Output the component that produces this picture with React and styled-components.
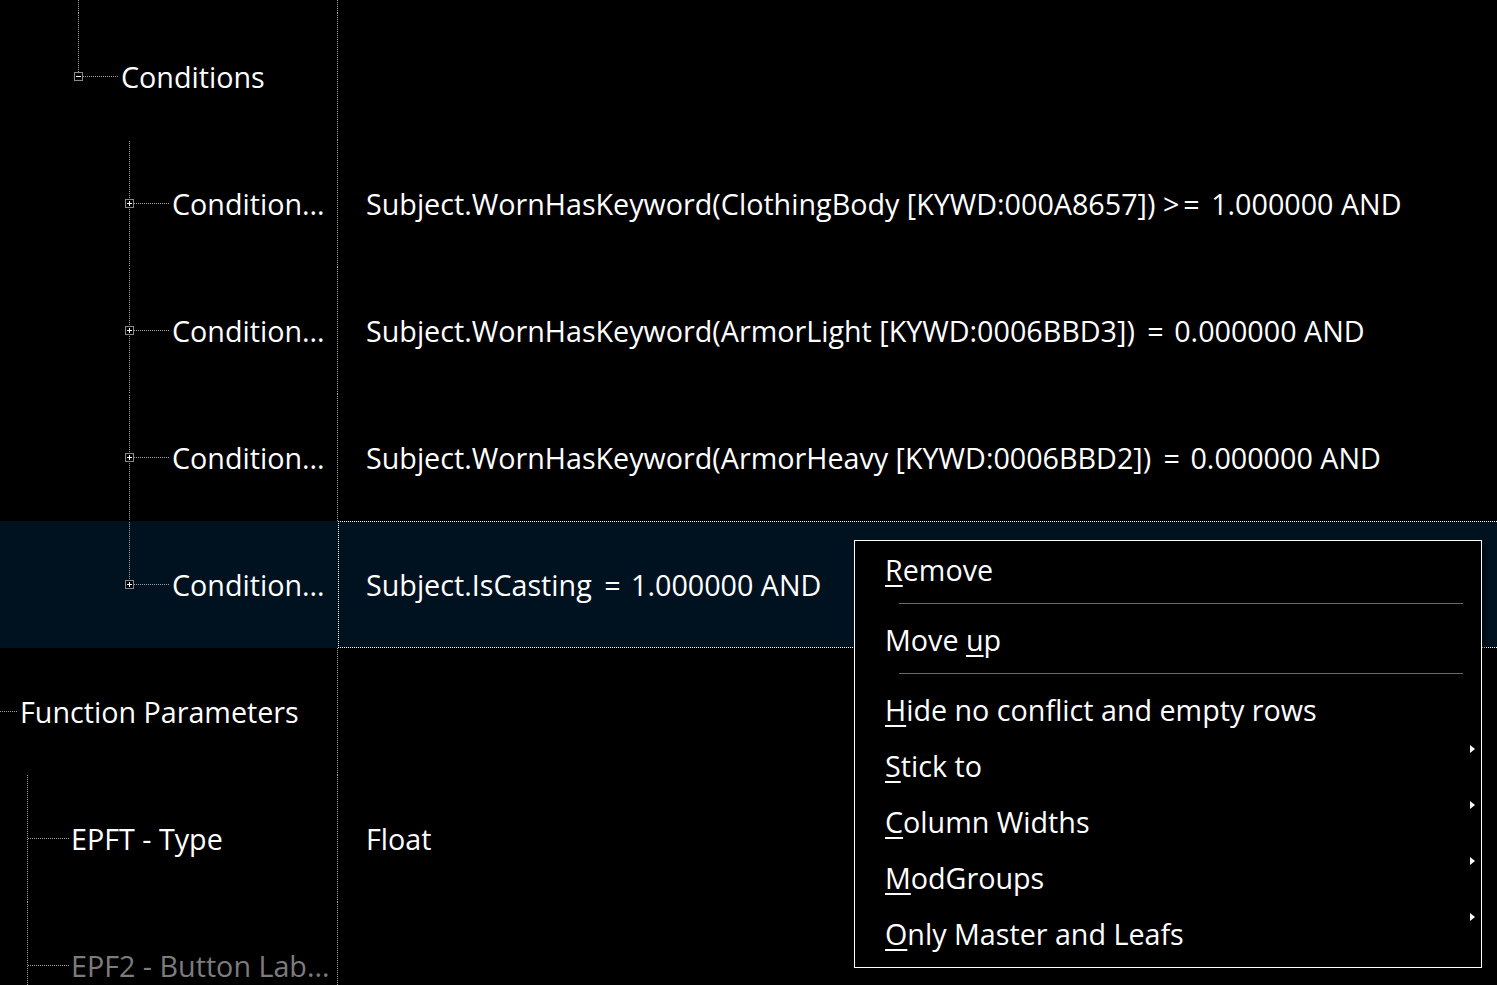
import React from "react";
import styled, { createGlobalStyle } from "styled-components";

const GlobalStyle = createGlobalStyle`
  html, body {
    margin: 0;
    padding: 0;
    background: #000;
  }
  body {
    font-family: "Segoe UI", "Open Sans", "Noto Sans", sans-serif;
    color: #fff;
  }
`;

const ROW_H = 127;
const DIVIDER_X = 338;
const LINE = "#a0a0a0";
const DOTS_V = `repeating-linear-gradient(to bottom, ${LINE} 0 1px, transparent 1px 2px)`;
const DOTS_H = `repeating-linear-gradient(to right, ${LINE} 0 1px, transparent 1px 2px)`;

// vertical tree line drawn as a background layer: x, from, to
const vLayer = (v) =>
  v ? `${DOTS_V} ${v.x}px ${v.from}px / 1px ${v.to - v.from}px no-repeat, ` : "";

const Page = styled.div`
  position: relative;
  width: 1497px;
  height: 985px;
  overflow: hidden;
  background: #000;
  font-size: 28.7px;
`;

const Row = styled.div`
  display: grid;
  grid-template-columns: ${DIVIDER_X}px 1fr;
  height: ${(p) => p.h || ROW_H}px;
  background: ${(p) => (p.selected ? "#001220" : "transparent")};
`;

const NameCell = styled.div`
  display: flex;
  align-items: center;
  padding-left: ${(p) => p.indent || 0}px;
  white-space: nowrap;
  color: ${(p) => (p.dim ? "#7c7c7c" : "#fff")};
  background: ${(p) => vLayer(p.vline)}
    ${(p) => (p.selected ? "none" : `${DOTS_V} right top / 1px 100% no-repeat`)};
`;

const Stub = styled.span`
  flex: none;
  width: ${(p) => p.w}px;
  height: 1px;
  margin-right: 2px;
  background: ${DOTS_H};
`;

const Label = styled.span`
  margin-top: -1px;
`;

const ValueCell = styled.div`
  display: flex;
  align-items: center;
  box-sizing: border-box;
  padding-left: ${(p) => (p.focused ? 27 : 28)}px;
  white-space: pre;
  border: ${(p) => (p.focused ? "1px dotted #fff" : "none")};
  border-right: none;

  & > span {
    margin-top: -1px;
  }
`;

const Op = styled.span`
  letter-spacing: ${(p) => (p.wide ? 4 : 0)}px;
  padding: 0 ${(p) => (p.wide ? 0 : 3)}px 0 ${(p) => (p.wide ? 0 : 5)}px;
`;

const BoxIcon = styled.svg`
  flex: none;
  display: block;
`;

const Expander = ({ open }) => (
  <BoxIcon width="9" height="9" viewBox="0 0 9 9">
    <rect x="0.5" y="0.5" width="8" height="8" fill="#000" stroke="#8a8a8a" />
    <line x1="2" y1="4.5" x2="7" y2="4.5" stroke="#fff" />
    {!open && <line x1="4.5" y1="2" x2="4.5" y2="7" stroke="#fff" />}
  </BoxIcon>
);

const Menu = styled.div`
  position: absolute;
  left: 854px;
  top: 540px;
  width: 628px;
  height: 428px;
  box-sizing: border-box;
  border: 1px solid #fff;
  background: #000;
  padding-top: 2px;
  box-shadow: 4px 4px 4px rgba(0, 0, 0, 0.45);
`;

const MenuItem = styled.div`
  height: 56px;
  display: flex;
  align-items: center;
  padding-left: 30px;
  padding-bottom: 4px;
  box-sizing: border-box;
  white-space: pre;

  u {
    text-decoration-thickness: 2px;
    text-underline-offset: 4px;
  }
`;

const SubArrow = styled.span`
  flex: none;
  align-self: flex-start;
  margin: 6px 6px 0 auto;
  width: 0;
  height: 0;
  border-left: 5px solid #fff;
  border-top: 4px solid transparent;
  border-bottom: 4px solid transparent;
`;

const Separator = styled.div`
  height: 1px;
  margin: 4px 18px 9px 44px;
  background: #6a6a6a;
`;

const conditions = [
  ["Subject.WornHasKeyword(ClothingBody [KYWD:000A8657])", ">=", "1.000000 AND"],
  ["Subject.WornHasKeyword(ArmorLight [KYWD:0006BBD3])", "=", "0.000000 AND"],
  ["Subject.WornHasKeyword(ArmorHeavy [KYWD:0006BBD2])", "=", "0.000000 AND"],
  ["Subject.IsCasting", "=", "1.000000 AND"],
];

const menuItems = [
  { key: "R", rest: "emove", sep: true },
  { pre: "Move ", key: "u", rest: "p", sep: true },
  { key: "H", rest: "ide no conflict and empty rows" },
  { key: "S", rest: "tick to", sub: true },
  { key: "C", rest: "olumn Widths", sub: true },
  { key: "M", rest: "odGroups", sub: true },
  { key: "O", rest: "nly Master and Leafs", sub: true },
];

export default function App() {
  return (
    <>
      <GlobalStyle />
      <Page>
        <Row h={13}>
          <NameCell vline={{ x: 78, from: 0, to: 13 }} />
          <div />
        </Row>

        <Row>
          <NameCell indent={74} vline={{ x: 78, from: 0, to: 59 }}>
            <Expander open />
            <Stub w={36} />
            <Label>Conditions</Label>
          </NameCell>
          <ValueCell />
        </Row>

        {conditions.map(([lhs, op, rhs], i) => {
          const last = i === conditions.length - 1;
          return (
            <Row key={i} selected={last}>
              <NameCell
                indent={125}
                selected={last}
                vline={{ x: 129, from: 1, to: last ? 59 : ROW_H }}
              >
                <Expander />
                <Stub w={36} />
                <Label>Condition...</Label>
              </NameCell>
              <ValueCell focused={last}>
                <span>
                  {lhs} <Op wide={op.length > 1}>{op}</Op> {rhs}
                </span>
              </ValueCell>
            </Row>
          );
        })}

        <Row>
          <NameCell>
            <Stub w={18} />
            <Label>Function Parameters</Label>
          </NameCell>
          <ValueCell />
        </Row>

        <Row>
          <NameCell indent={28} vline={{ x: 27, from: 0, to: ROW_H }}>
            <Stub w={41} />
            <Label>EPFT - Type</Label>
          </NameCell>
          <ValueCell>
            <span>Float</span>
          </ValueCell>
        </Row>

        <Row>
          <NameCell indent={28} dim vline={{ x: 27, from: 0, to: ROW_H }}>
            <Stub w={41} />
            <Label>EPF2 - Button Lab...</Label>
          </NameCell>
          <ValueCell />
        </Row>

        <Menu>
          {menuItems.map((m, i) => (
            <React.Fragment key={i}>
              <MenuItem>
                <span>
                  {m.pre}
                  <u>{m.key}</u>
                  {m.rest}
                </span>
                {m.sub && <SubArrow />}
              </MenuItem>
              {m.sep && <Separator />}
            </React.Fragment>
          ))}
        </Menu>
      </Page>
    </>
  );
}
